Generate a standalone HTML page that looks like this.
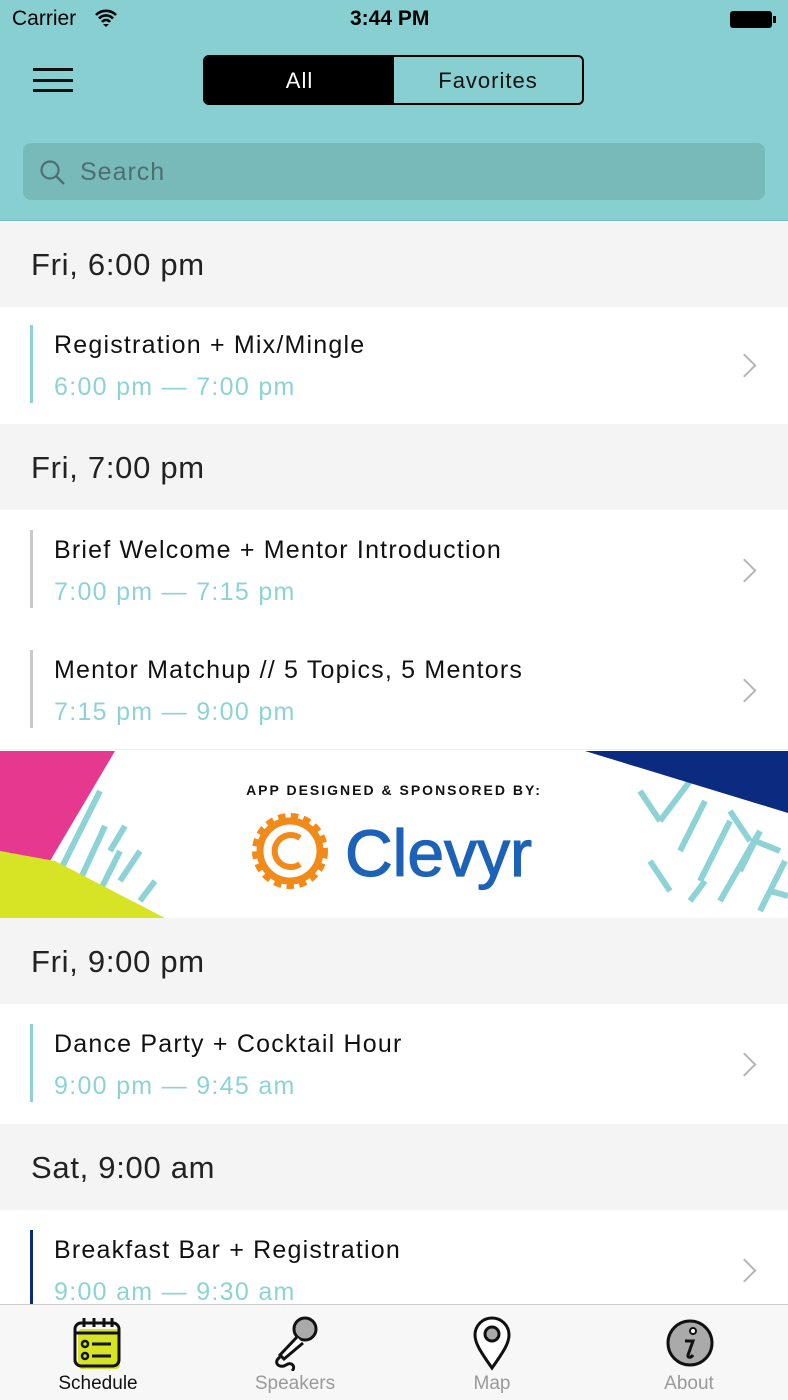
<!DOCTYPE html>
<html><head><meta charset="utf-8"><style>
*{margin:0;padding:0;box-sizing:border-box}
body{width:788px;height:1400px;overflow:hidden;font-family:"Liberation Sans",sans-serif;background:#fff;position:relative}
.hdr{position:absolute;left:0;top:0;width:788px;height:221px;background:#87cfd1;border-bottom:1px solid #78b9ba}
.abs{position:absolute}
.sec{position:absolute;left:0;width:788px;height:86px;background:#f4f4f4;font-size:31px;color:#222;padding:26px 0 0 31px;letter-spacing:0.7px}
.row{position:absolute;left:0;width:788px;background:#fff}
.bar{position:absolute;left:30px;width:3px}
.t{position:absolute;left:54px;font-size:25px;color:#111;letter-spacing:1.2px}
.tm{position:absolute;left:54px;font-size:25px;color:#8dd3d5;letter-spacing:1.3px}
.chev{position:absolute;left:736px;width:17px;height:17px;border-right:2.5px solid #b5b5b5;border-top:2.5px solid #b5b5b5;transform:rotate(45deg)}
.tab{position:absolute;top:1372px;font-size:19px;color:#9a9a9a;text-align:center;width:150px}
</style></head><body>
<div class="hdr">
 <div class="abs" style="left:12px;top:7px;font-size:21px;color:#000">Carrier</div>
 <svg class="abs" style="left:94px;top:9px" width="24" height="18" viewBox="0 0 24 18"><path d="M2 6a14 14 0 0 1 20 0M5 9.5a9.5 9.5 0 0 1 14 0M8 13a5 5 0 0 1 8 0" stroke="#000" stroke-width="2.6" fill="none"/><path d="M12 18l-3-3h6z" fill="#000"/></svg>
 <div class="abs" style="left:350px;top:7px;font-size:21px;font-weight:bold;color:#000">3:44 PM</div>
 <div class="abs" style="left:730px;top:11px;width:42px;height:17px;background:#000;border-radius:3px"></div>
 <div class="abs" style="left:773px;top:16px;width:3px;height:7px;background:#000"></div>
 <div class="abs" style="left:33px;top:68px;width:40px;height:3px;background:#111;box-shadow:0 11px 0 #111,0 21px 0 #111"></div>
 <div class="abs" style="left:203px;top:55px;width:381px;height:50px;border:2px solid #000;border-radius:6px;overflow:hidden">
  <div class="abs" style="left:0;top:0;width:189px;height:46px;background:#000;color:#fff;font-size:22px;text-align:center;line-height:48px;letter-spacing:1px">All</div>
  <div class="abs" style="left:189px;top:0;width:188px;height:46px;color:#111;font-size:22px;text-align:center;line-height:48px;letter-spacing:1px">Favorites</div>
 </div>
 <div class="abs" style="left:23px;top:143px;width:742px;height:57px;background:#78b9ba;border-radius:8px">
  <svg class="abs" style="left:16px;top:16px" width="28" height="28" viewBox="0 0 28 28"><circle cx="11" cy="11" r="8.5" stroke="#4e6f70" stroke-width="2.2" fill="none"/><path d="M17 17l8 8" stroke="#4e6f70" stroke-width="2.4"/></svg>
  <div class="abs" style="left:57px;top:15px;font-size:25px;color:#4e6f70;letter-spacing:1px">Search</div>
 </div>
</div>

<div class="sec" style="top:221px">Fri, 6:00 pm</div>
<div class="row" style="top:307px;height:117px"><div class="bar" style="top:18px;height:78px;background:#8dd3d5"></div><div class="t" style="top:24px">Registration + Mix/Mingle</div><div class="tm" style="top:66px">6:00 pm — 7:00 pm</div><div class="chev" style="top:50px"></div></div>
<div class="sec" style="top:424px">Fri, 7:00 pm</div>
<div class="row" style="top:510px;height:240px;border-bottom:1px solid #eee"><div class="bar" style="top:20px;height:78px;background:#c8c8c8"></div><div class="t" style="top:26px">Brief Welcome + Mentor Introduction</div><div class="tm" style="top:68px">7:00 pm — 7:15 pm</div><div class="chev" style="top:52px"></div>
<div class="bar" style="top:140px;height:78px;background:#c8c8c8"></div><div class="t" style="top:146px">Mentor Matchup // 5 Topics, 5 Mentors</div><div class="tm" style="top:188px">7:15 pm — 9:00 pm</div><div class="chev" style="top:172px"></div></div>

<svg class="abs" style="left:0;top:751px" width="788" height="167" viewBox="0 0 788 167">
<rect width="788" height="167" fill="#fff"/>
<g stroke="#8dd3d5" stroke-width="6">
<path d="M40 120l30-60M55 130l35-70M75 140l30-65M95 150l25-50M60 70l-15 30M90 60l10-20M110 100l15-25M120 130l20-30M140 150l15-20M30 140l20-30"/>
<path d="M640 40l20 30M660 70l30-40M680 100l25-50M700 130l30-60M720 150l40-70M740 120l20-40M760 160l25-50M650 110l20 30M690 150l15-20M730 60l20 30M755 90l25 10M770 140l18 5"/>
</g>
<polygon points="0,0 115,0 50,110 0,100" fill="#e6388e"/>
<polygon points="0,100 55,110 165,167 0,167" fill="#d7e426"/>
<polygon points="585,0 788,0 788,62" fill="#0b2b80"/>
<text x="394" y="44" text-anchor="middle" font-family="Liberation Sans" font-weight="bold" font-size="14" letter-spacing="2" fill="#111">APP DESIGNED &amp; SPONSORED BY:</text>
<g transform="translate(290,100)"><circle r="33" fill="none" stroke="#f28a1a" stroke-width="10" stroke-dasharray="7 5"/><circle r="30" fill="none" stroke="#f28a1a" stroke-width="7"/><path d="M10-13A16 16 0 1 0 10 13" fill="none" stroke="#f28a1a" stroke-width="6"/></g>
<text x="345" y="125" font-family="Liberation Sans" font-size="66" fill="#1c62b6" stroke="#1c62b6" stroke-width="1.2">Clevyr</text>
</svg>

<div class="sec" style="top:918px">Fri, 9:00 pm</div>
<div class="row" style="top:1004px;height:120px"><div class="bar" style="top:20px;height:78px;background:#8dd3d5"></div><div class="t" style="top:26px">Dance Party + Cocktail Hour</div><div class="tm" style="top:68px">9:00 pm — 9:45 am</div><div class="chev" style="top:52px"></div></div>
<div class="sec" style="top:1124px">Sat, 9:00 am</div>
<div class="row" style="top:1210px;height:95px"><div class="bar" style="top:20px;height:78px;background:#0b2b80"></div><div class="t" style="top:26px">Breakfast Bar + Registration</div><div class="tm" style="top:68px">9:00 am — 9:30 am</div><div class="chev" style="top:52px"></div></div>

<div class="abs" style="left:0;top:1304px;width:788px;height:96px;background:#f7f7f7;border-top:1px solid #ccc">
 <svg class="abs" style="left:72px;top:10px" width="54" height="56" viewBox="0 0 54 56"><rect x="6" y="14" width="42" height="40" rx="4" fill="#d7e426"/><rect x="3" y="8" width="44" height="43" rx="6" fill="none" stroke="#111" stroke-width="3"/><path d="M12 3v9M22 3v9M32 3v9M40 3v9M3 18h44" stroke="#111" stroke-width="3"/><circle cx="13" cy="29" r="3" fill="none" stroke="#111" stroke-width="2.5"/><circle cx="13" cy="41" r="3" fill="none" stroke="#111" stroke-width="2.5"/><path d="M20 29h19M20 41h19" stroke="#111" stroke-width="3"/></svg>
 <div class="tab" style="left:23px;top:68px;color:#111">Schedule</div>
 <svg class="abs" style="left:270px;top:10px" width="52" height="56" viewBox="0 0 52 56"><circle cx="35" cy="14" r="11" fill="#aaa" stroke="#111" stroke-width="3"/><path d="M27 22L10 40l4 4 19-16" fill="#fff" stroke="#111" stroke-width="3"/><path d="M10 42c-8 6 0 12 6 8s10 2 6 6" fill="none" stroke="#111" stroke-width="3"/></svg>
 <div class="tab" style="left:220px;top:68px">Speakers</div>
 <svg class="abs" style="left:472px;top:10px" width="40" height="56" viewBox="0 0 40 56"><path d="M20 53C8 36 3 28 3 20a17 17 0 0 1 34 0c0 8-5 16-17 33z" fill="#fff" stroke="#111" stroke-width="3"/><circle cx="20" cy="19" r="7" fill="#aaa" stroke="#111" stroke-width="3"/></svg>
 <div class="tab" style="left:417px;top:68px">Map</div>
 <svg class="abs" style="left:664px;top:12px" width="52" height="52" viewBox="0 0 52 52"><circle cx="26" cy="26" r="22" fill="#aaa" stroke="#111" stroke-width="3"/><circle cx="29" cy="14" r="3" fill="#fff" stroke="#111" stroke-width="2"/><path d="M21 24h8l-5 14c-1 3 3 3 5 0" fill="none" stroke="#111" stroke-width="3"/></svg>
 <div class="tab" style="left:614px;top:68px">About</div>
</div>
</body></html>
